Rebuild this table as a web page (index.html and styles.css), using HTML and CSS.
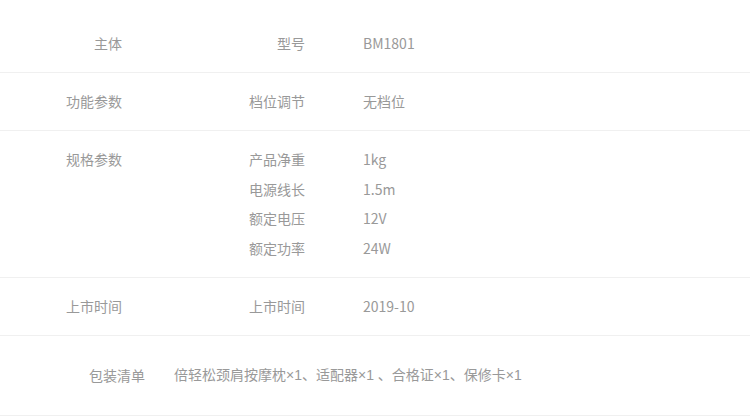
FILE: index.html
```html
<!DOCTYPE html>
<html lang="zh-CN">
<head>
  <meta charset="UTF-8" />
  <meta name="viewport" content="width=device-width, initial-scale=1.0"/>
  <title>规格参数</title>
  <link rel="stylesheet" href="styles.css">
</head>
<body>
  <div class="spec-table">
    <div class="spec-row">
      <div class="group">主体</div>
      <div class="items">
        <div class="item"><span class="key">型号</span><span class="val">BM1801</span></div>
      </div>
    </div>
    <div class="spec-row">
      <div class="group">功能参数</div>
      <div class="items">
        <div class="item"><span class="key">档位调节</span><span class="val">无档位</span></div>
      </div>
    </div>
    <div class="spec-row multi">
      <div class="group">规格参数</div>
      <div class="items">
        <div class="item"><span class="key">产品净重</span><span class="val">1kg</span></div>
        <div class="item"><span class="key">电源线长</span><span class="val">1.5m</span></div>
        <div class="item"><span class="key">额定电压</span><span class="val">12V</span></div>
        <div class="item"><span class="key">额定功率</span><span class="val">24W</span></div>
      </div>
    </div>
    <div class="spec-row">
      <div class="group">上市时间</div>
      <div class="items">
        <div class="item"><span class="key">上市时间</span><span class="val">2019-10</span></div>
      </div>
    </div>
    <div class="pack-row">
      <div class="pack-label">包装清单</div>
      <div class="pack-list">倍轻松颈肩按摩枕×1、适配器×1 、合格证×1、保修卡×1</div>
    </div>
  </div>
</body>
</html>
```

FILE: styles.css
```css
body {
  margin: 0;
  background-color: #fff;
  color: #999;
  font-family: "Noto Sans CJK SC", "Noto Sans", sans-serif;
  font-size: 14px;
}

.spec-table {
  padding-top: 15px;
}

.spec-row {
  display: grid;
  grid-template-columns: 122px 183px 1fr;
  padding: 14px 0;
  line-height: 29px;
  border-bottom: 1px solid #f0f0f0;
}

.spec-row.multi .item {
  line-height: 29.5px;
}

.group {
  text-align: right;
}

.items {
  grid-column: 2 / 4;
}

.item {
  display: grid;
  grid-template-columns: 183px 1fr;
  column-gap: 58px;
}

.key {
  text-align: right;
}

.pack-row {
  display: grid;
  grid-template-columns: 145px 1fr;
  column-gap: 29px;
  padding: 25px 0;
  line-height: 29px;
  border-bottom: 1px solid #f0f0f0;
}

.pack-label {
  text-align: right;
}

.pack-list {
  font-family: "Liberation Sans", "Noto Sans CJK SC", sans-serif;
}
```
